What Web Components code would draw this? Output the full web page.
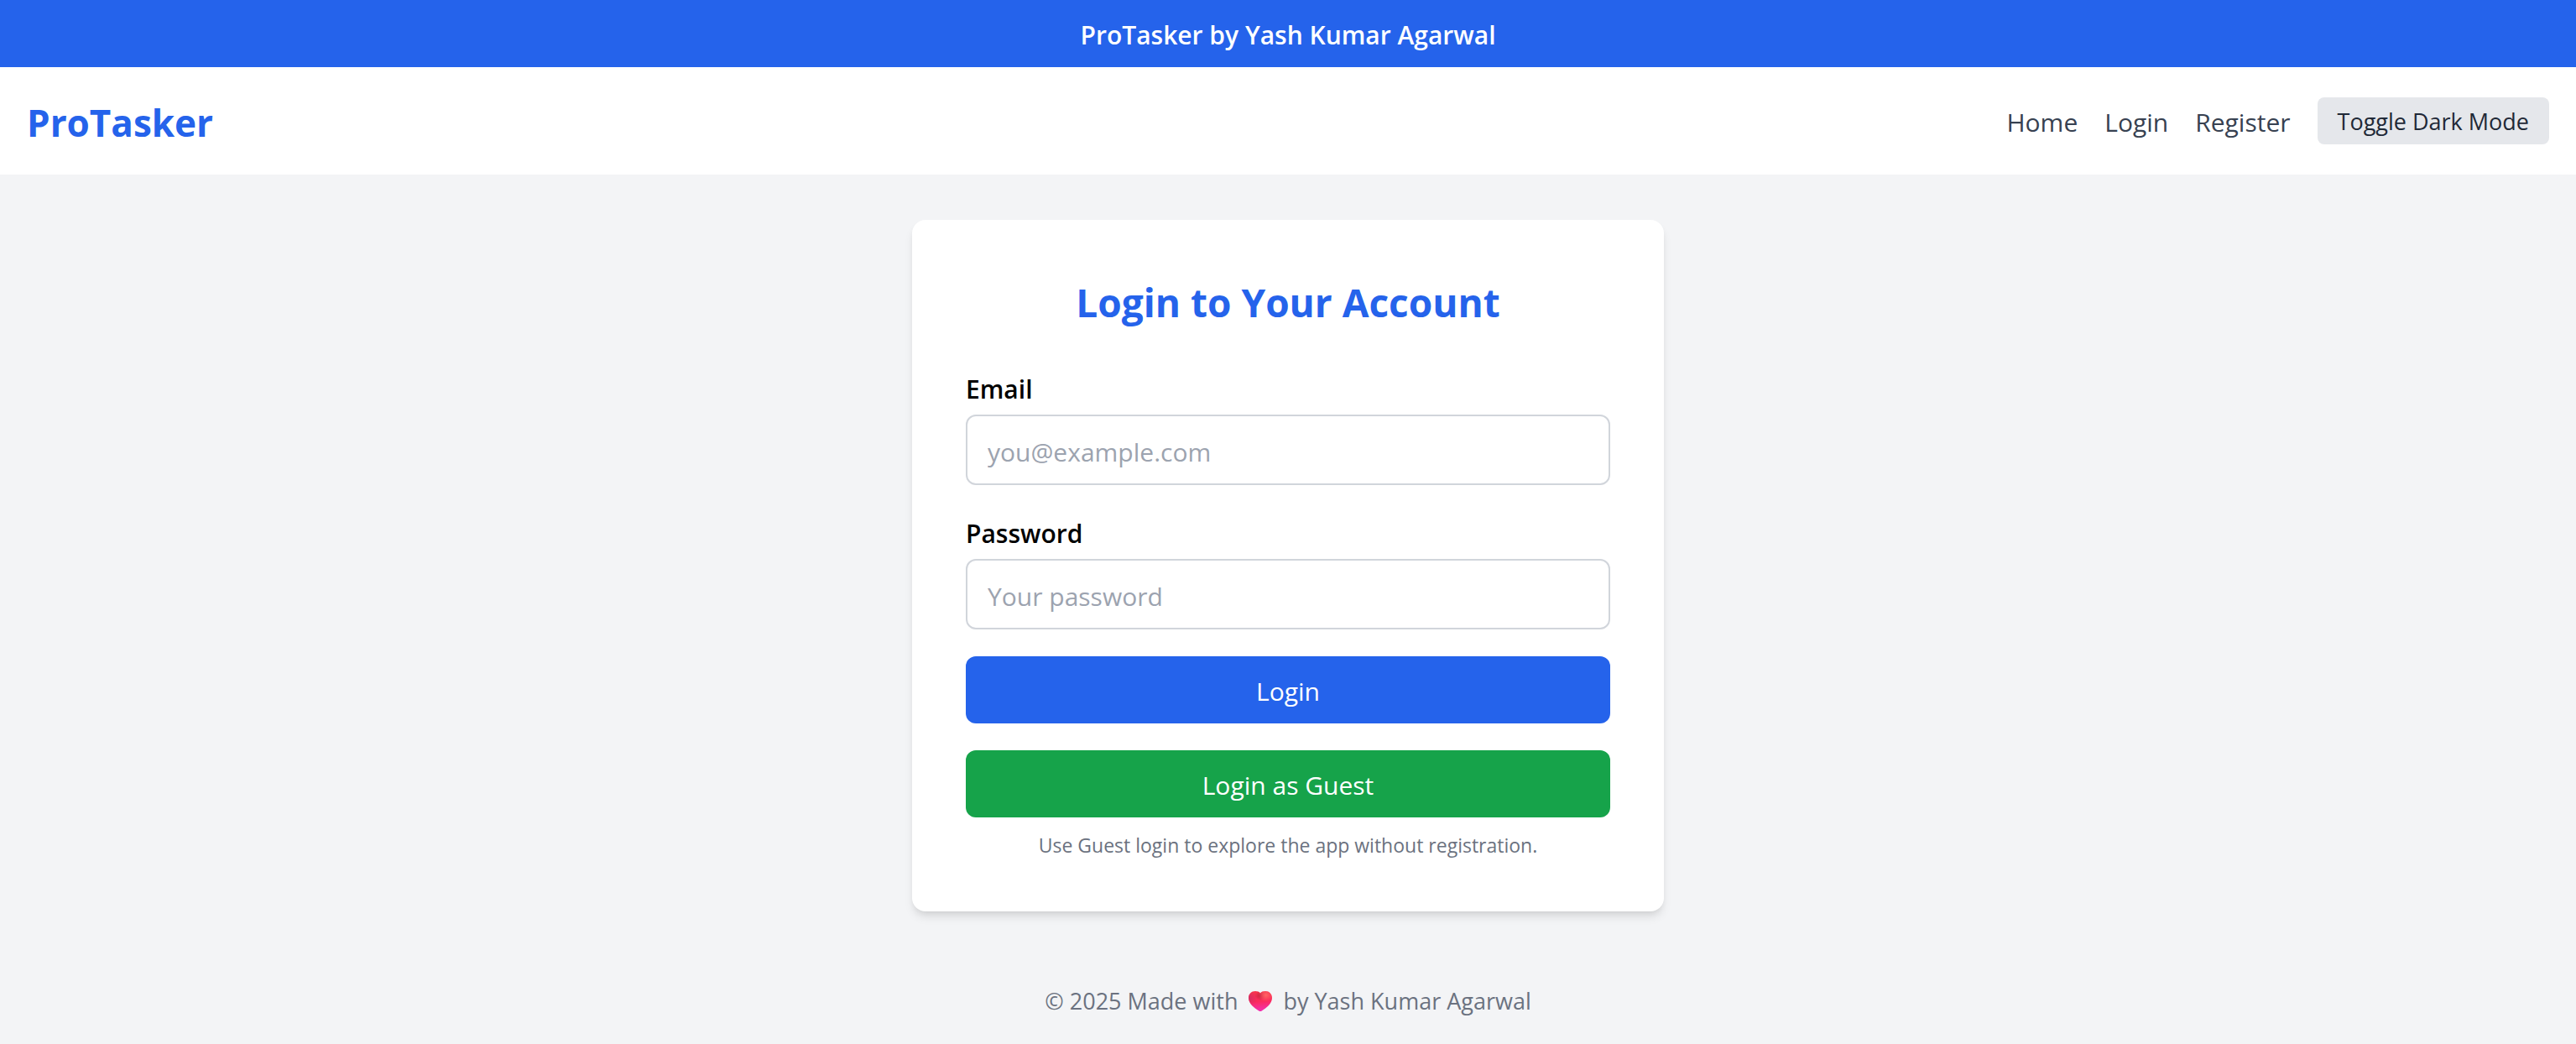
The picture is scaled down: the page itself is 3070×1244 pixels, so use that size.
<!DOCTYPE html>
<html lang="en">
<head>
<meta charset="utf-8">
<meta name="viewport" content="width=device-width, initial-scale=1">
<title>ProTasker</title>
<style>
  :root {
    --blue: #2563eb;
    --green: #16a34a;
    --text-sm: 23px;
    --text-md: 27px;
    --text-base: 30px;
    --text-brand: 44px;
    --text-xl: 46px;
  }
  body {
    margin: 0;
    background: #f3f4f6;
    color: #000;
    font-family: "Segoe UI", "Open Sans", "Noto Sans", sans-serif;
    font-size: var(--text-base);
    line-height: 48px;
  }
</style>
</head>
<body>
<pt-app>
  <pt-banner slot="top">ProTasker by Yash Kumar Agarwal</pt-banner>
  <pt-navbar slot="top" brand="ProTasker">
    <pt-nav-link href="#home">Home</pt-nav-link>
    <pt-nav-link href="#login">Login</pt-nav-link>
    <pt-nav-link href="#register">Register</pt-nav-link>
    <pt-theme-toggle>Toggle Dark Mode</pt-theme-toggle>
  </pt-navbar>
  <pt-login-card heading="Login to Your Account">
    <pt-field label="Email" type="email" placeholder="you@example.com"></pt-field>
    <pt-field label="Password" type="password" placeholder="Your password"></pt-field>
    <pt-button>Login</pt-button>
    <pt-button variant="guest">Login as Guest</pt-button>
    <span slot="hint">Use Guest login to explore the app without registration.</span>
  </pt-login-card>
  <pt-footer slot="bottom"></pt-footer>
</pt-app>

<script>
  class Base extends HTMLElement {
    constructor() {
      super();
      this.attachShadow({ mode: "open" });
    }
    connectedCallback() {
      this.shadowRoot.innerHTML =
        `<style>*{box-sizing:border-box}${this.styles()}</style>${this.markup()}`;
    }
  }

  customElements.define("pt-app", class extends Base {
    styles() {
      return `
        :host { display: flex; flex-direction: column; min-height: 100vh; }
        main { flex: 1; display: flex; align-items: center; justify-content: center; }`;
    }
    markup() {
      return `<slot name="top"></slot><main><slot></slot></main><slot name="bottom"></slot>`;
    }
  });

  customElements.define("pt-banner", class extends Base {
    styles() {
      return `
        :host { display: block; padding: 18px 16px 14px; background: var(--blue); color: #fff;
                font-weight: 600; text-align: center; }`;
    }
    markup() { return `<slot></slot>`; }
  });

  customElements.define("pt-navbar", class extends Base {
    styles() {
      return `
        :host { display: block; background: #fff; }
        header { display: flex; align-items: center; justify-content: space-between; padding: 32px; }
        .brand { padding-top: 4px; color: var(--blue); font-size: var(--text-brand);
                 font-weight: 700; line-height: 60px; text-decoration: none; }
        nav { display: flex; align-items: center; gap: 32px; }`;
    }
    markup() {
      return `<header><a class="brand" href="#">${this.getAttribute("brand")}</a><nav><slot></slot></nav></header>`;
    }
  });

  customElements.define("pt-nav-link", class extends Base {
    styles() {
      return `:host { display: block; padding-top: 4px; } a { color: #374151; text-decoration: none; }`;
    }
    markup() { return `<a href="${this.getAttribute("href")}"><slot></slot></a>`; }
  });

  customElements.define("pt-theme-toggle", class extends Base {
    styles() {
      return `
        :host { display: block; }
        button { display: block; border: 0; border-radius: 8px; padding: 9px 24px 7px;
                 background: #e5e7eb; color: #1f2937; font: inherit;
                 font-size: var(--text-md); line-height: 40px; cursor: pointer; }`;
    }
    markup() { return `<button type="button"><slot></slot></button>`; }
  });

  customElements.define("pt-login-card", class extends Base {
    styles() {
      return `
        :host { display: block; box-sizing: border-box; width: 100%; max-width: 896px; padding: 64px;
                background: #fff; border-radius: 16px;
                box-shadow: 0 8px 12px -2px rgb(0 0 0 / .1), 0 4px 8px -4px rgb(0 0 0 / .1); }
        h2 { margin: 0 0 46px; padding-top: 2px; color: var(--blue); font-size: var(--text-xl);
             font-weight: 700; line-height: 64px; text-align: center; }
        form { display: flex; flex-direction: column; gap: 32px; }
        p { margin: 18px 0 0; color: #6b7280; font-size: var(--text-sm); line-height: 30px;
            text-align: center; }`;
    }
    markup() {
      return `<h2>${this.getAttribute("heading")}</h2>
        <form><slot></slot></form>
        <p><slot name="hint"></slot></p>`;
    }
  });

  customElements.define("pt-field", class extends Base {
    styles() {
      return `
        :host { display: flex; flex-direction: column; gap: 6px; }
        label { padding-top: 2px; font-weight: 600; }
        input { width: 100%; height: 84px; border: 2px solid #d1d5db; border-radius: 12px;
                padding: 18px 24px 14px; background: #fff; color: #000; font: inherit; }
        input::placeholder { color: #9ca3af; opacity: 1; }`;
    }
    markup() {
      const a = (n) => this.getAttribute(n);
      return `<label for="control">${a("label")}</label>
        <input id="control" type="${a("type")}" placeholder="${a("placeholder")}">`;
    }
  });

  customElements.define("pt-button", class extends Base {
    styles() {
      return `
        :host { display: block; }
        button { display: block; width: 100%; border: 0; border-radius: 12px; padding: 18px 16px 14px;
                 background: var(--blue); color: #fff; font: inherit; cursor: pointer; }
        :host([variant="guest"]) button { background: var(--green); }`;
    }
    markup() { return `<button type="button"><slot></slot></button>`; }
  });

  customElements.define("pt-heart", class extends Base {
    styles() {
      return `:host { display: inline-block; padding: 0 5px; } svg { display: block; width: 28px; height: 24px; }`;
    }
    markup() {
      return `<svg viewBox="0 0 28 24" role="img" aria-label="love">
        <defs>
          <linearGradient id="base" x1=".45" y1="0" x2=".55" y2="1">
            <stop offset="0" stop-color="#f9354c"/><stop offset=".5" stop-color="#fb2a5c"/>
            <stop offset="1" stop-color="#f22fb4"/>
          </linearGradient>
          <radialGradient id="glow" cx=".74" cy=".2" r=".32">
            <stop offset="0" stop-color="#ff6464"/><stop offset="1" stop-color="#ff6464" stop-opacity="0"/>
          </radialGradient>
          <radialGradient id="shade" cx=".5" cy=".22" r=".24">
            <stop offset="0" stop-color="#b8203c" stop-opacity=".8"/><stop offset="1" stop-color="#b8203c" stop-opacity="0"/>
          </radialGradient>
          <radialGradient id="side" cx="0" cy=".35" r=".4">
            <stop offset="0" stop-color="#c42b68" stop-opacity=".7"/><stop offset="1" stop-color="#c42b68" stop-opacity="0"/>
          </radialGradient>
          <path id="h" d="M14 2.400C12.600.8 10.600 0 8 0 3.500 0 0 3.400 0 8c0 6.600 6.500 12 12.200 15.500q1.800 1 3.600 0C21.500 20 28 14.600 28 8c0-4.600-3.500-8-8-8-2.600 0-4.600.8-6 2.400z"/>
        </defs>
        <use href="#h" fill="url(#base)"/><use href="#h" fill="url(#side)"/>
        <use href="#h" fill="url(#shade)"/><use href="#h" fill="url(#glow)"/>
      </svg>`;
    }
  });

  customElements.define("pt-footer", class extends Base {
    styles() {
      return `
        :host { display: block; }
        footer { display: flex; align-items: center; justify-content: center; gap: 8px; padding: 33px 32px 31px;
                 color: #6b7280; font-size: var(--text-md); line-height: 40px; }`;
    }
    markup() {
      return `<footer><span>© 2025 Made with</span><pt-heart></pt-heart><span>by Yash Kumar Agarwal</span></footer>`;
    }
  });
</script>
</body>
</html>
